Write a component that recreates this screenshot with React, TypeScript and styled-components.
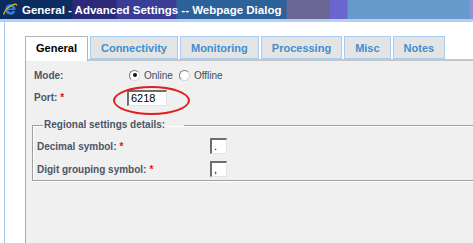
import React from 'react';
import styled, { createGlobalStyle } from 'styled-components';

const GlobalStyle = createGlobalStyle`
  html, body {
    margin: 0;
    padding: 0;
    background: #ffffff;
  }
  body {
    font-family: 'Liberation Sans', Arial, sans-serif;
  }
`;

const Page = styled.div`
  width: 473px;
  height: 243px;
  overflow: hidden;
  background: #ffffff;
  display: flex;
  flex-direction: column;
`;

const TitleBar = styled.div`
  height: 19px;
  flex-shrink: 0;
  display: flex;
  align-items: center;
  gap: 4px;
  padding-left: 3px;
  background: linear-gradient(
    to right,
    #0b2a5e 0px,
    #0d2c62 72px,
    #2c2a78 73px,
    #2c2a78 116px,
    #3a3d95 117px,
    #3a3d95 176px,
    #2d6199 177px,
    #2d6199 286px,
    #6a6592 287px,
    #6a6592 329px,
    #6b66cf 330px,
    #6b66cf 347px,
    #6699cc 348px,
    #6699cc 469px,
    #9a90d0 470px
  );
`;

const TitleText = styled.span`
  color: #ffffff;
  font-weight: bold;
  font-size: 11.5px;
  white-space: nowrap;
`;

const FrameStrip = styled.div`
  height: 3px;
  flex-shrink: 0;
  background: #b4cff0;
`;

const Client = styled.div`
  flex: 1;
  display: flex;
  flex-direction: column;
  margin-left: 4px;
  border-left: 1px solid #a9c9ee;
  padding: 14px 0 0 20px;
  min-height: 0;
`;

const TabStrip = styled.div`
  display: flex;
  align-items: flex-end;
  gap: 2px;
  height: 23px;
  flex-shrink: 0;
`;

const Tab = styled.div<{ $active?: boolean }>`
  box-sizing: border-box;
  height: ${(p) => (p.$active ? '25px' : '23px')};
  margin-bottom: ${(p) => (p.$active ? '-2px' : '0')};
  position: relative;
  z-index: ${(p) => (p.$active ? 1 : 0)};
  display: flex;
  align-items: center;
  justify-content: center;
  padding: ${(p) => (p.$active ? '0 10px 2px' : '0 10px')};
  font-size: 11px;
  font-weight: bold;
  white-space: nowrap;
  color: ${(p) => (p.$active ? '#000000' : '#3d8fd1')};
  background: ${(p) => (p.$active ? '#ffffff' : '#e4e4e4')};
  border: 1px solid ${(p) => (p.$active ? '#b4b4b4' : '#a8cdf0')};
  border-bottom: ${(p) => (p.$active ? 'none' : '1px solid #a8cdf0')};
`;

const Panel = styled.div`
  position: relative;
  flex: 1;
  background: #f0f0f0;
  border-left: 1px solid #a9a9a9;
  border-top: 2px solid #c6c6c6;
  padding: 5px 0 0 6px;
`;

const FormRows = styled.div`
  display: flex;
  flex-direction: column;
  gap: 4px;
  margin-left: 2px;
`;

const Row = styled.div<{ $h: number; $label: number }>`
  display: grid;
  grid-template-columns: ${(p) => p.$label}px auto;
  align-items: center;
  height: ${(p) => p.$h}px;
`;

const Label = styled.span`
  font-size: 10px;
  font-weight: bold;
  color: #4b5567;
  white-space: nowrap;
`;

const Req = styled.span`
  color: #e01010;
  font-weight: bold;
  margin-left: 3px;
`;

const RadioGroup = styled.div`
  display: flex;
  align-items: center;
  margin-left: 2px;
`;

const RadioDot = styled.span<{ $checked?: boolean }>`
  box-sizing: border-box;
  width: 11px;
  height: 11px;
  border-radius: 50%;
  background: #ffffff;
  border: 1px solid;
  border-color: #7a7a7a #d8d8d8 #d8d8d8 #7a7a7a;
  display: flex;
  align-items: center;
  justify-content: center;

  &::after {
    content: '';
    width: 4px;
    height: 4px;
    border-radius: 50%;
    background: ${(p) => (p.$checked ? '#111111' : 'transparent')};
  }
`;

const RadioText = styled.span`
  font-size: 10px;
  color: #3f4b5d;
  margin: 0 6px 0 4px;
`;

const InputWrap = styled.div`
  position: relative;
  display: inline-block;
`;

const TextBox = styled.div<{ $w: number }>`
  box-sizing: border-box;
  width: ${(p) => p.$w}px;
  height: 16px;
  background: #ffffff;
  border-style: solid;
  border-width: 2px 1px 1px 2px;
  border-color: #6e6e6e #e3e3e3 #e3e3e3 #6e6e6e;
  font-size: 11px;
  line-height: 13px;
  color: #000000;
  padding-left: 2px;
  display: flex;
  align-items: flex-end;
`;

const Circle = styled.div`
  position: absolute;
  left: -14px;
  top: -4px;
  width: 77px;
  height: 29px;
  box-sizing: border-box;
  border: 2px solid #e02020;
  border-radius: 50%;
  pointer-events: none;
`;

const Group = styled.fieldset`
  margin: 15px 0 0 0;
  width: calc(100% + 30px);
  box-sizing: border-box;
  padding: 7px 0 3px 4px;
  border: 1px solid #a0a0a0;
  box-shadow: inset 1px 1px 0 #ffffff, 0 1px 0 #ffffff;
`;

const Legend = styled.legend`
  margin-left: 6px;
  padding: 0 19px 0 1px;
  font-size: 10px;
  line-height: 12px;
  font-weight: bold;
  color: #4b5567;
`;

const GroupRows = styled.div`
  display: flex;
  flex-direction: column;
  gap: 7px;
`;

function IeIcon() {
  return (
    <svg width="15" height="15" viewBox="0 0 16 16">
      <path
        d="M8 2.5a5.5 5.5 0 1 0 5.2 7.2h-3a2.6 2.6 0 0 1-4.6-1.2h7.8A5.5 5.5 0 0 0 8 2.5zm-2.3 4.3a2.5 2.5 0 0 1 4.6 0z"
        fill="#2f7fd6"
      />
      <path
        d="M1.2 13.5c-1-2 2.5-6.5 7-9.2 4-2.4 6.8-2.6 6.2-0.4"
        fill="none"
        stroke="#f0b400"
        strokeWidth="1.3"
      />
    </svg>
  );
}

const tabs = ['General', 'Connectivity', 'Monitoring', 'Processing', 'Misc', 'Notes'];

export default function App() {
  return (
    <>
      <GlobalStyle />
      <Page>
        <TitleBar>
          <IeIcon />
          <TitleText>General - Advanced Settings -- Webpage Dialog</TitleText>
        </TitleBar>
        <FrameStrip />
        <Client>
          <TabStrip>
            {tabs.map((t, i) => (
              <Tab key={t} $active={i === 0}>
                {t}
              </Tab>
            ))}
          </TabStrip>
          <Panel>
            <FormRows>
              <Row $h={18} $label={93}>
                <Label>Mode:</Label>
                <RadioGroup>
                  <RadioDot $checked />
                  <RadioText>Online</RadioText>
                  <RadioDot />
                  <RadioText>Offline</RadioText>
                </RadioGroup>
              </Row>
              <Row $h={16} $label={93}>
                <Label>
                  Port:<Req>*</Req>
                </Label>
                <div>
                  <InputWrap>
                    <TextBox $w={40}>6218</TextBox>
                    <Circle />
                  </InputWrap>
                </div>
              </Row>
            </FormRows>
            <Group>
              <Legend>Regional settings details:</Legend>
              <GroupRows>
                <Row $h={16} $label={173}>
                  <Label>
                    Decimal symbol:<Req>*</Req>
                  </Label>
                  <TextBox $w={17}>.</TextBox>
                </Row>
                <Row $h={16} $label={173}>
                  <Label>
                    Digit grouping symbol:<Req>*</Req>
                  </Label>
                  <TextBox $w={17}>,</TextBox>
                </Row>
              </GroupRows>
            </Group>
          </Panel>
        </Client>
      </Page>
    </>
  );
}
